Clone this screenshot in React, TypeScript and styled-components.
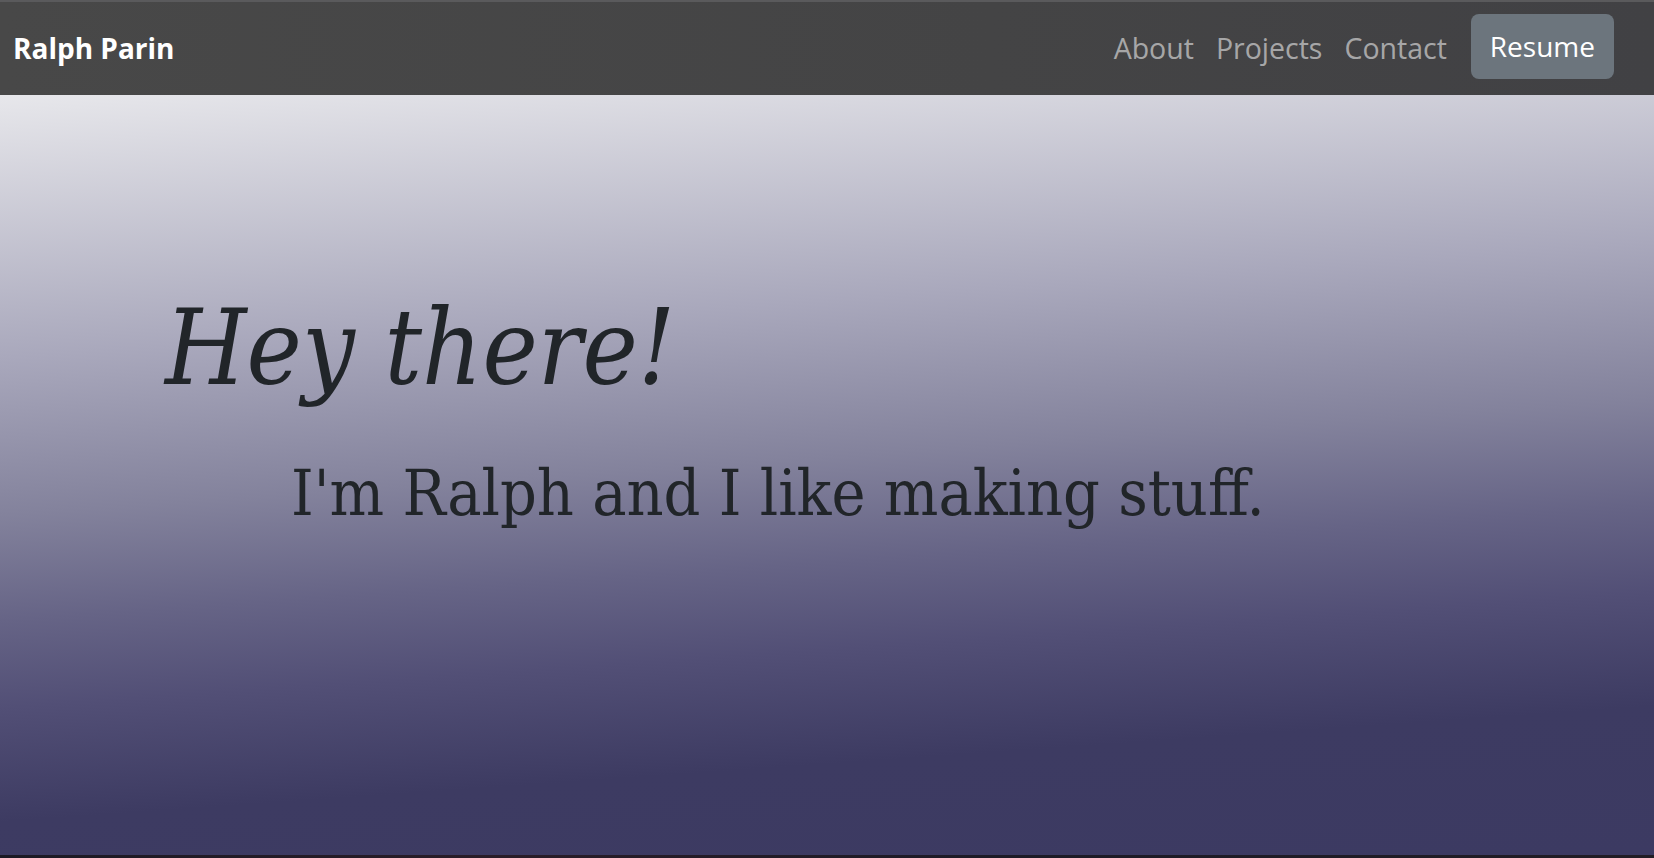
import React from "react";
import styled, { createGlobalStyle } from "styled-components";

const GlobalStyle = createGlobalStyle`
  html, body {
    margin: 0;
    padding: 0;
    background: #1d1b24;
    overflow: hidden;
  }
  * { box-sizing: border-box; }
`;

const Page = styled.div`
  display: flex;
  flex-direction: column;
  width: 100%;
  height: 858px;
`;

const NavBar = styled.nav`
  height: 95px;
  flex: none;
  display: flex;
  align-items: center;
  justify-content: space-between;
  padding: 0 40px 0 13px;
  border-top: 2px solid #5a5a5c;
  background: linear-gradient(90deg, #484848 0%, #444445 60%, #414144 100%);
  font-family: "Open Sans", "Noto Sans", sans-serif;
`;

const Brand = styled.a`
  color: #ffffff;
  font-weight: 700;
  font-size: 28px;
  letter-spacing: 0;
  text-decoration: none;
  margin-top: -1px;
`;

const NavList = styled.div`
  display: flex;
  align-items: center;
`;

const NavLink = styled.a`
  color: rgba(255, 255, 255, 0.55);
  font-size: 28.5px;
  padding: 0 11px;
  text-decoration: none;
  margin-top: -1px;
`;

const ResumeButton = styled.a`
  margin-left: 13px;
  height: 65px;
  padding: 0 19px 2px 19px;
  display: flex;
  align-items: center;
  background: #6c757d;
  color: #ffffff;
  font-size: 28px;
  border-radius: 8px;
  text-decoration: none;
  margin-top: -4px;
`;

const Hero = styled.section`
  height: 760px;
  flex: none;
  padding: 191px 0 0 165px;
  background: linear-gradient(
    176deg,
    #e7e7eb 0%,
    #a9a8bc 30%,
    #83829c 48%,
    #666486 60%,
    #524f76 70%,
    #3d3b62 83%,
    #3c3a62 100%
  );
  color: #212529;
  font-family: "DejaVu Serif", "Liberation Serif", serif;
  font-stretch: semi-condensed;
`;

const Title = styled.h1`
  margin: 0;
  font-size: 104px;
  font-weight: 400;
  font-style: italic;
  line-height: 1.2;
`;

const Subtitle = styled.p`
  margin: 44px 0 0 126px;
  font-size: 64px;
  font-weight: 400;
  line-height: 1.2;
`;

const BottomStrip = styled.div`
  flex: 1;
  background: linear-gradient(90deg, #1c1a24, #2a1d28 30%, #1d1b26 60%, #221d25);
`;

export default function App() {
  return (
    <>
      <GlobalStyle />
      <Page>
        <NavBar>
          <Brand href="#">Ralph Parin</Brand>
          <NavList>
            <NavLink href="#">About</NavLink>
            <NavLink href="#">Projects</NavLink>
            <NavLink href="#">Contact</NavLink>
            <ResumeButton href="#">Resume</ResumeButton>
          </NavList>
        </NavBar>
        <Hero>
          <Title>Hey there!</Title>
          <Subtitle>I'm Ralph and I like making stuff.</Subtitle>
        </Hero>
        <BottomStrip />
      </Page>
    </>
  );
}
